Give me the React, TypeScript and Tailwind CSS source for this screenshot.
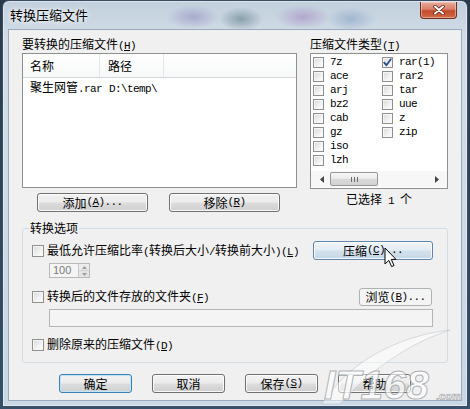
import React from "react";

function Txt({ s }: { s: string }) {
  const out: React.ReactNode[] = [];
  const re = /([\x00-\x7f]+)|([^\x00-\x7f]+)/g;
  let m: RegExpExecArray | null;
  let k = 0;
  while ((m = re.exec(s)) !== null) {
    if (m[1]) {
      const run = m[1];
      const parts: React.ReactNode[] = [];
      let buf = "";
      let i = 0;
      while (i < run.length) {
        if (run[i] === "&" && i + 1 < run.length) {
          if (buf) parts.push(buf);
          buf = "";
          parts.push(<u key={i}>{run[i + 1]}</u>);
          i += 2;
        } else {
          buf += run[i];
          i++;
        }
      }
      if (buf) parts.push(buf);
      out.push(
        <span key={k++} className="font-['Liberation_Mono'] text-[11px] tracking-[-0.6px] whitespace-pre">
          {parts}
        </span>
      );
    } else {
      out.push(<span key={k++}>{m[2]}</span>);
    }
  }
  return <>{out}</>;
}

const btnBase =
  "flex items-center justify-center rounded-[3px] border text-[12px] leading-none text-black whitespace-nowrap";
const btnNormal =
  "border-[#707070] bg-[linear-gradient(to_bottom,#f2f2f2_0%,#ebebeb_49%,#dddddd_51%,#cfcfcf_100%)] shadow-[inset_0_0_0_1px_rgba(255,255,255,0.85)]";
const btnDefault =
  "border-[#3c7fb1] bg-[linear-gradient(to_bottom,#f2f2f2_0%,#ebebeb_49%,#dddddd_51%,#cfcfcf_100%)] shadow-[inset_0_0_0_1px_#bfe6f8]";
const btnHover =
  "border-[#5f86a8] bg-[linear-gradient(to_bottom,#f0f5f9_0%,#e3ecf3_49%,#d3e1ec_51%,#c6d7e6_100%)] shadow-[inset_0_0_0_1px_rgba(255,255,255,0.8)]";
const btnDisabled = "border-[#adb2b5] bg-[#f4f4f4] text-[#8a8a8a]";

function Check({ checked = false, small = false }: { checked?: boolean; small?: boolean }) {
  return (
    <span
      className={
        small
          ? "relative flex h-[11px] w-[11px] shrink-0 items-center justify-center border border-[#8f8f8f] bg-[linear-gradient(135deg,#d9d9d9,#f6f6f6_70%,#ffffff)] shadow-[inset_0_0_0_1px_#f7f7f7]"
          : "relative flex h-[12px] w-[12px] shrink-0 items-center justify-center border border-[#8f8f8f] bg-[linear-gradient(135deg,#d9d9d9,#f6f6f6_70%,#ffffff)] shadow-[inset_0_0_0_1px_#f7f7f7]"
      }
    >
      {checked && (
        <svg width="9" height="9" viewBox="0 0 9 9">
          <path d="M1.2 4.6 L3.4 7.2 L7.8 1.2" fill="none" stroke="#24508f" strokeWidth="1.8" strokeLinecap="round" strokeLinejoin="round" />
        </svg>
      )}
    </span>
  );
}

export default function App() {
  const col1 = ["7z", "ace", "arj", "bz2", "cab", "gz", "iso", "lzh"];
  const col2 = ["rar(1)", "rar2", "tar", "uue", "z", "zip"];
  return (
    <div className="relative h-[409px] w-[470px] overflow-hidden bg-[linear-gradient(to_bottom,#2a3a4e,#34506a)] pl-[2px] font-['Noto_Sans_CJK_SC',sans-serif] text-[12px] text-black">
      <div className="flex h-[407px] w-[466px] flex-col rounded-t-[7px] border border-[#3b4d62] bg-[radial-gradient(ellipse_26px_12px_at_190px_16px,rgba(110,90,170,0.35),transparent),radial-gradient(ellipse_22px_12px_at_238px_18px,rgba(40,80,90,0.4),transparent),radial-gradient(ellipse_28px_12px_at_300px_16px,rgba(140,80,170,0.35),transparent),radial-gradient(ellipse_24px_12px_at_348px_18px,rgba(70,110,170,0.3),transparent),linear-gradient(to_bottom,#c2d0dd,#d2dde7_40px,#c9d7e4)] shadow-[inset_0_0_0_1px_rgba(255,255,255,0.45)]">
        {/* title bar */}
        <div className="flex h-[28px] items-start justify-between">
          <span className="ml-[7px] mt-[6px] text-[13px] leading-[16px] [text-shadow:0_0_6px_#ffffff,0_0_3px_#ffffff]">
            转换压缩文件
          </span>
          <div className="mr-[10px] mt-[1px] flex h-[17px] w-[37px] items-center justify-center rounded-b-[4px] border border-t-0 border-[#6b2e22] bg-[linear-gradient(to_bottom,#e9ab9c_0%,#d9806a_45%,#c44a2a_55%,#d06a45_100%)] shadow-[inset_0_0_0_1px_rgba(255,220,210,0.5)]">
            <svg width="12" height="10" viewBox="0 0 12 10">
              <path d="M2 1.5 L10 8.5 M10 1.5 L2 8.5" stroke="#5a1c10" strokeWidth="3.4" strokeLinecap="round" />
              <path d="M2 1.5 L10 8.5 M10 1.5 L2 8.5" stroke="#ffffff" strokeWidth="2" strokeLinecap="round" />
            </svg>
          </div>
        </div>

        {/* client */}
        <div className="ml-[5px] flex h-[372px] w-[454px] flex-col border border-[#9aabbd] bg-[#f0f0f0]">
          {/* top section */}
          <div className="mt-[6px] flex items-start px-[13px]">
            <div className="flex w-[275px] flex-col">
              <div className="h-[16px] leading-[16px]">
                <Txt s="要转换的压缩文件(&H)" />
              </div>
              <div className="mt-[1px] h-[135px] border border-[#8e8f8f] bg-white">
                <div className="flex h-[24px] border-b border-[#d5d5d5] bg-[linear-gradient(to_bottom,#ffffff,#f7f8f9)]">
                  <div className="flex w-[77px] items-center border-r border-[#e3e6ea] pl-[7px]">名称</div>
                  <div className="flex w-[64px] items-center border-r border-[#e3e6ea] pl-[8px]">路径</div>
                  <div className="flex-1" />
                </div>
                <div className="flex h-[19px] items-center whitespace-nowrap">
                  <div className="w-[78px] pl-[7px]">
                    <Txt s="聚生网管.rar" />
                  </div>
                  <div className="pl-[8px]">
                    <Txt s="D:\temp\" />
                  </div>
                </div>
              </div>
              <div className="mt-[5px] flex gap-[21px] pl-[15px]">
                <button className={btnBase + " " + btnNormal + " h-[19px] w-[111px]"}>
                  <Txt s="添加(&A)..." />
                </button>
                <button className={btnBase + " " + btnNormal + " h-[19px] w-[111px]"}>
                  <Txt s="移除(&R)" />
                </button>
              </div>
            </div>

            <div className="ml-[13px] flex w-[138px] flex-col">
              <div className="h-[16px] leading-[16px]">
                <Txt s="压缩文件类型(&T)" />
              </div>
              <div className="mt-[1px] flex h-[136px] flex-col border border-[#8e8f8f] bg-white">
                <div className="flex pl-[2px] pt-[1px]">
                  <div className="flex w-[69px] flex-col">
                    {col1.map((t) => (
                      <div key={t} className="flex h-[14px] items-center gap-[6px]">
                        <Check small />
                        <Txt s={t} />
                      </div>
                    ))}
                  </div>
                  <div className="flex flex-col">
                    {col2.map((t, i) => (
                      <div key={t} className="flex h-[14px] items-center gap-[6px]">
                        <Check small checked={i === 0} />
                        <Txt s={t} />
                      </div>
                    ))}
                  </div>
                </div>
                <div className="mt-auto mb-[1px] flex h-[16px] items-center bg-[#f7f7f7]">
                  <svg className="ml-[9px]" width="4" height="7" viewBox="0 0 4 7">
                    <path d="M4 0 L0 3.5 L4 7 Z" fill="#444" />
                  </svg>
                  <div className="ml-[6px] flex h-[14px] w-[48px] items-center justify-center gap-[2px] rounded-[2px] border border-[#979797] bg-[linear-gradient(to_bottom,#f7f7f7,#e9e9e9_50%,#d9d9d9_51%,#d2d2d2)]">
                    <span className="h-[5px] w-px bg-[#6a6a6a]" />
                    <span className="h-[5px] w-px bg-[#6a6a6a]" />
                    <span className="h-[5px] w-px bg-[#6a6a6a]" />
                  </div>
                  <div className="flex-1" />
                  <svg className="mr-[8px]" width="4" height="7" viewBox="0 0 4 7">
                    <path d="M0 0 L4 3.5 L0 7 Z" fill="#444" />
                  </svg>
                </div>
              </div>
              <div className="mt-[2px] h-[16px] text-center leading-[16px]">
                <Txt s="已选择 1 个" />
              </div>
            </div>
          </div>

          {/* group */}
          <fieldset className="mx-[13px] mt-[8px] rounded-[3px] border border-[#d3dce3] pb-[9px] pl-[9px] pr-[14px] pt-[5px]">
            <legend className="-ml-[3px] h-[16px] px-[1px] leading-[16px]">转换选项</legend>
            <div className="flex h-[19px] items-center">
              <Check />
              <span className="ml-[3px] whitespace-nowrap">
                <Txt s="最低允许压缩比率(转换后大小/转换前大小)(&L)" />
              </span>
              <button className={btnBase + " " + btnHover + " ml-auto h-[19px] w-[120px]"}>
                <Txt s="压缩(&C)..." />
              </button>
            </div>
            <div className="ml-[17px] mt-[3px] flex h-[15px] w-[41px] items-center border border-[#b9b9b9] bg-[#f4f4f4]">
              <span className="ml-[3px] flex-1 font-['Liberation_Sans'] text-[11px] leading-none text-[#7a7a7a]">100</span>
              <div className="flex h-full w-[11px] flex-col border-l border-[#c8c8c8]">
                <div className="flex flex-1 items-center justify-center border-b border-[#d0d0d0] bg-[#ececec]">
                  <svg width="5" height="3" viewBox="0 0 5 3">
                    <path d="M0 3 L2.5 0 L5 3 Z" fill="#9a9a9a" />
                  </svg>
                </div>
                <div className="flex flex-1 items-center justify-center bg-[#e4e4e4]">
                  <svg width="5" height="3" viewBox="0 0 5 3">
                    <path d="M0 0 L2.5 3 L5 0 Z" fill="#9a9a9a" />
                  </svg>
                </div>
              </div>
            </div>
            <div className="mt-[10px] flex h-[18px] items-center">
              <Check />
              <span className="ml-[3px] whitespace-nowrap">
                <Txt s="转换后的文件存放的文件夹(&F)" />
              </span>
              <button className={btnBase + " " + btnDisabled + " ml-auto mr-[1px] h-[18px] w-[73px]"}>
                <Txt s="浏览(&B)..." />
              </button>
            </div>
            <div className="ml-[17px] mt-[3px] h-[18px] w-[384px] border border-[#b5b5b5] bg-[#f4f4f4]" />
            <div className="mt-[10px] flex h-[16px] items-center">
              <Check />
              <span className="ml-[3px] whitespace-nowrap">
                <Txt s="删除原来的压缩文件(&D)" />
              </span>
            </div>
          </fieldset>

          {/* bottom buttons */}
          <div className="mt-[11px] flex justify-center gap-[20px]">
            <button className={btnBase + " " + btnDefault + " h-[19px] w-[73px]"}>确定</button>
            <button className={btnBase + " " + btnNormal + " h-[19px] w-[73px]"}>取消</button>
            <button className={btnBase + " " + btnNormal + " h-[19px] w-[73px]"}>
              <Txt s="保存(&S)" />
            </button>
            <button className={btnBase + " " + btnNormal + " h-[19px] w-[73px]"}>帮助</button>
          </div>
        </div>
      </div>

      {/* watermark */}
      <svg className="pointer-events-none absolute left-[318px] top-[322px]" width="150" height="84" viewBox="0 0 150 84">
        <path d="M4 82 C 30 40, 80 14, 132 8 C 95 20, 55 45, 22 82 Z" fill="#ffffff" fillOpacity="0.5" stroke="#b9c2ca" strokeOpacity="0.55" strokeWidth="1" />
        <text x="6" y="77" fontFamily="Liberation Sans" fontWeight="bold" fontStyle="italic" fontSize="41" fill="#ffffff" fillOpacity="0.65" stroke="#8c9298" strokeOpacity="0.7" strokeWidth="1">
          IT168
        </text>
        <text x="118" y="78" fontFamily="Liberation Sans" fontWeight="bold" fontSize="11" fill="#ffffff" fillOpacity="0.8" stroke="#9aa0a6" strokeWidth="0.6">
          .com
        </text>
      </svg>

      {/* mouse cursor */}
      <svg className="pointer-events-none absolute left-[384px] top-[247px]" width="13" height="21" viewBox="0 0 13 21">
        <path d="M1 1 L1 17 L4.8 13.4 L7.6 19.6 L10 18.5 L7.3 12.4 L12 12.4 Z" fill="#ffffff" stroke="#000000" strokeWidth="1" strokeLinejoin="round" />
      </svg>
    </div>
  );
}
